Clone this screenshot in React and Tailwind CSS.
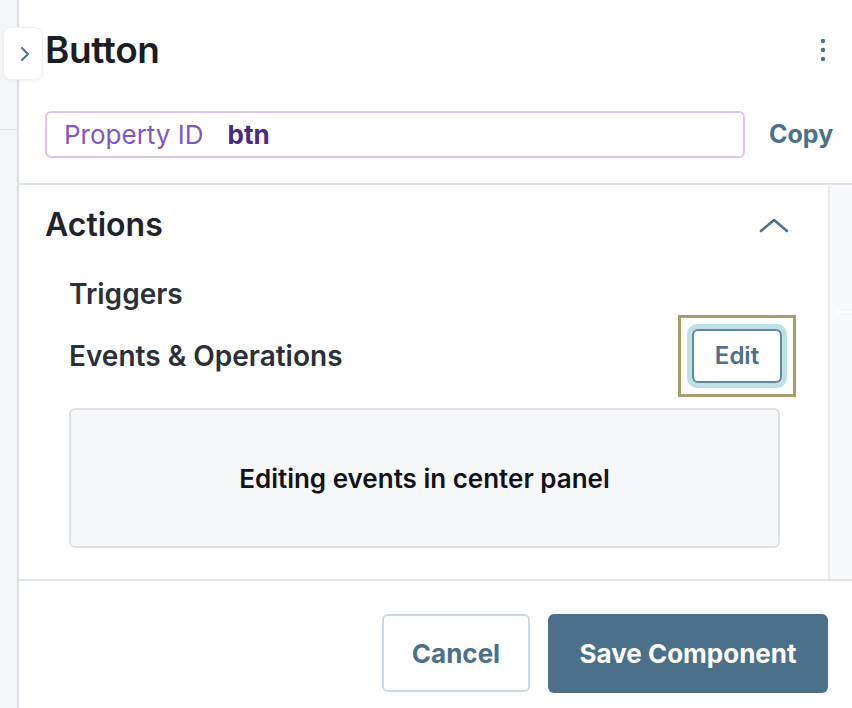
export default function App() {
  return (
    <div
      className="relative flex h-[708px] w-[852px] overflow-hidden bg-white"
      style={{ fontFamily: "Inter, 'Noto Sans', sans-serif" }}
    >
      {/* left rail */}
      <div className="w-[19px] shrink-0 border-r-2 border-[#d9dee4] bg-[#f4f5f7]">
        <div className="h-[130px] border-b border-[#dfe3e8]" />
      </div>

      {/* collapse tab */}
      <div className="absolute left-[3px] top-[27px] flex h-[53px] w-[40px] items-center justify-center rounded-[8px] border border-[#eef0f2] bg-white shadow-[0_1px_3px_rgba(0,0,0,0.06)]">
        <svg width="12" height="16" viewBox="0 0 12 16" className="ml-[4px]">
          <path d="M3 2l6 6-6 6" fill="none" stroke="#4a7189" strokeWidth="2" strokeLinecap="round" strokeLinejoin="round" />
        </svg>
      </div>

      <div className="flex min-w-0 flex-1 flex-col">
        {/* header */}
        <div className="h-[185px] shrink-0 border-b-2 border-[#dfe3e8] pl-[26px] pr-[16px]">
          <div className="flex h-[100px] items-start justify-between pt-[27px]">
            <h1 className="text-[37px] font-semibold leading-[46px] tracking-[-0.01em] text-[#1a1d24]">
              Button
            </h1>
            <svg width="6" height="24" viewBox="0 0 6 24" className="mr-[10px] mt-[11px]">
              <circle cx="3" cy="3" r="2.2" fill="#4a7189" />
              <circle cx="3" cy="12" r="2.2" fill="#4a7189" />
              <circle cx="3" cy="21" r="2.2" fill="#4a7189" />
            </svg>
          </div>
          <div className="mt-[11px] flex items-center gap-[24px]">
            <div className="flex h-[47px] w-[700px] items-center gap-[24px] rounded-[6px] border-2 border-[#dcc3f0] px-[17px]">
              <span className="text-[26px] text-[#8256c2]">Property ID</span>
              <span className="text-[26px] font-bold text-[#4b2a86]">btn</span>
            </div>
            <span className="text-[25px] font-bold text-[#4a7189]">Copy</span>
          </div>
        </div>

        {/* body */}
        <div className="flex h-[396px] shrink-0 border-b-2 border-[#dfe3e8]">
          <div className="w-[811px] shrink-0 border-r-2 border-[#e8eaed] pl-[26px] pr-[48px]">
            <div className="flex h-[78px] items-center justify-between pt-[2px]">
              <h2 className="text-[32px] font-semibold text-[#1f232b]">Actions</h2>
              <svg width="30" height="16" viewBox="0 0 30 16" className="mr-[-9px]">
                <path d="M2 14L15 3l13 11" fill="none" stroke="#4a7189" strokeWidth="2.6" strokeLinecap="round" strokeLinejoin="round" />
              </svg>
            </div>
            <div className="pl-[24px]">
              <div className="flex h-[60px] items-center pt-[1px] text-[28px] font-semibold text-[#2a2f38]">
                Triggers
              </div>
              <div className="flex h-[66px] items-center justify-between">
                <span className="text-[28px] font-semibold text-[#2a2f38]">Events &amp; Operations</span>
                <div className="mr-[-16px] border-[3px] border-[#aa9c6a] px-[6px] py-[6px]">
                  <div className="rounded-[10px] bg-[#bfe0e8] p-[5px]">
                    <button className="flex h-[54px] w-[90px] items-center justify-center rounded-[6px] border-2 border-[#5f8a9d] bg-white text-[24px] font-semibold text-[#4a7189]">
                      Edit
                    </button>
                  </div>
                </div>
              </div>
              <div className="mt-[19px] flex h-[140px] items-center justify-center rounded-[6px] border-2 border-[#dde1e6] bg-[#f6f7f9]">
                <span className="text-[26px] font-semibold text-[#111318]">Editing events in center panel</span>
              </div>
            </div>
          </div>
          <div className="flex-1 bg-[#f8f9fa] pt-[126px]">
            <div className="ml-[6px] h-[2px] bg-white" />
          </div>
        </div>

        {/* footer */}
        <div className="flex flex-1 items-start justify-end gap-[18px] pr-[24px] pt-[33px]">
          <button className="h-[78px] w-[148px] rounded-[6px] border-2 border-[#cdd7df] bg-white text-[26px] font-bold text-[#4a7189]">
            Cancel
          </button>
          <button className="h-[79px] w-[280px] rounded-[6px] bg-[#4a7189] text-[26px] font-bold text-white">
            Save Component
          </button>
        </div>
      </div>
    </div>
  );
}
